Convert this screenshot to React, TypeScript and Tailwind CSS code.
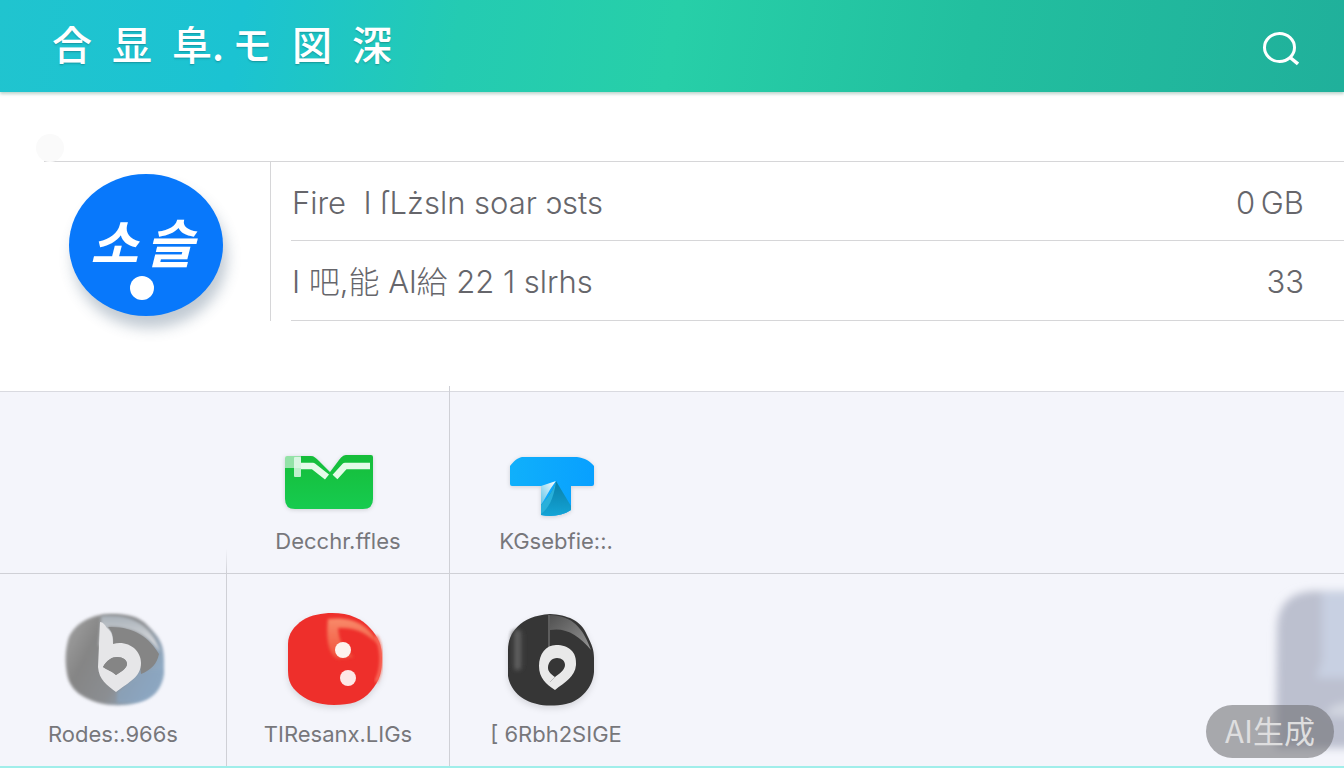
import type { ReactNode } from "react";

const titleGlyphs = ["合", "显", "阜.", "モ", "図", "深"];

const stats = [
  { label: "Fire\u00a0 I \u017fL\u017csln soar \u0254sts", value: "0\u2009GB" },
  { label: "I 吧,能 Al給 22 1 slrhs", value: "33" },
];

function SearchIcon() {
  return (
    <svg viewBox="0 0 36 34" className="h-[34px] w-9" fill="none" stroke="white" strokeWidth="3">
      <ellipse cx="16.5" cy="15.5" rx="15" ry="14" />
      <path d="M26.500 25 L35 32" strokeWidth="3.5" />
    </svg>
  );
}

function FolderIcon() {
  return (
    <svg viewBox="0 0 120 112" className="h-28 w-[120px] drop-shadow-sm">
      <defs>
        <linearGradient id="folder" x1="0" y1="0" x2="0" y2="1">
          <stop offset="0" stopColor="#16bd3a" />
          <stop offset="1" stopColor="#16cb4f" />
        </linearGradient>
      </defs>
      <path
        d="M9 41 H33 C36 41 38 43 41 46 L52 57 L61 45 C64 41 66 40 69 40 H93 Q95 40 95 42 V84 Q95 94 85 94 H17 Q7 94 7 84 V43 Q7 41 9 41Z"
        fill="url(#folder)"
      />
      <rect x="7" y="41" width="16" height="12" fill="#eafaf0" opacity=".6" />
      <rect x="16" y="42" width="7" height="20" rx="1" fill="#eafaf0" opacity=".8" />
      <path d="M23 51 H35 L49 62 M57 62 L67 51 H92" fill="none" stroke="#e6fbe9" strokeWidth="6.5" strokeLinejoin="round" />
    </svg>
  );
}

function BrushIcon() {
  return (
    <svg viewBox="0 0 120 112" className="h-28 w-[120px] drop-shadow-sm">
      <defs>
        <linearGradient id="brush" x1="0" y1="0" x2="1" y2="0">
          <stop offset="0" stopColor="#10b0fb" />
          <stop offset="1" stopColor="#08a0ff" />
        </linearGradient>
        <linearGradient id="brushLight" x1="0" y1="1" x2="1" y2="0">
          <stop offset="0" stopColor="#5fc4e8" />
          <stop offset="1" stopColor="#ffffff" />
        </linearGradient>
        <linearGradient id="brushDark" x1="0" y1="0" x2="0" y2="1">
          <stop offset="0" stopColor="#0a7fa8" />
          <stop offset="1" stopColor="#13a4d6" />
        </linearGradient>
      </defs>
      <path
        d="M26 42 H81 C89 43 94 46 98 51 V69 Q98 71 96 71 H75 V95 C66 101 55 102 45 100 V71 H16 Q14 71 14 69 V51 C18 46 21 43 26 42Z"
        fill="url(#brush)"
      />
      <path d="M45 71 L60 66 C55 72 50 82 45 90Z" fill="url(#brushLight)" />
      <path d="M60 66 L75 91 V95 C66 101 55 102 45 100 V90 C50 84 57 78 60 66Z" fill="url(#brushDark)" />
      <path d="M60 66 C57 78 50 84 45 90 V99 C52 94 58 84 60 66Z" fill="#29b0da" />
    </svg>
  );
}

function SilverIcon() {
  return (
    <svg viewBox="0 0 120 112" className="h-28 w-[120px]">
      <defs>
        <linearGradient id="silver" x1="0" y1="0" x2="1" y2=".5">
          <stop offset="0" stopColor="#a5a5a5" />
          <stop offset=".35" stopColor="#858585" />
          <stop offset=".7" stopColor="#8b8e92" />
          <stop offset="1" stopColor="#8fa9c2" />
        </linearGradient>
        <linearGradient id="stem" x1="0" y1="0" x2="0" y2="1">
          <stop offset="0" stopColor="#a8b0b8" />
          <stop offset="1" stopColor="#e6e6e8" />
        </linearGradient>
        <filter id="silverSoft" x="-10%" y="-10%" width="120%" height="120%">
          <feGaussianBlur stdDeviation="1.5" />
        </filter>
      </defs>
      <path
        d="M58 6 C74 6 86 8 95 18 C106 29 111 36 111 52 V66 C109 82 99 92 83 95 C72 98 58 98 46 95 C29 90 17 82 14 66 C12 54 12 44 15 32 C19 18 36 6 58 6Z"
        fill="url(#silver)"
        filter="url(#silverSoft)"
      />
      <path d="M64 84 L90 62 L109 62 C107 80 98 91 83 94 L64 95Z" fill="#8aa4bf" opacity=".7" filter="url(#silverSoft)" />
      <path d="M48 8 C78 5 99 17 107 44 C94 26 78 19 54 19 L60 24 V38 H46Z" fill="url(#stem)" filter="url(#silverSoft)" />
      <path d="M55 19 C80 18 96 29 106 46 C104 56 98 62 88 66 C88 48 76 36 60 37 C61 29 59 23 55 19Z" fill="#858585" />
      <path
        d="M47 14 C50 14 52 17 54 20 C59 24 60 29 60 36 C75 32 88 42 88 55 C88 69 76 74 63 84 C54 77 46 72 45 59Z M50 59 C54 52 59 49 64 49 C70 49 74 52 74 56 C74 60 68 64 63 67 C59 63 54 62 50 59Z"
        fill="#e6e6e8"
        fillRule="evenodd"
      />
      <path d="M50 59 C54 52 59 49 64 49 C70 49 74 52 74 56 C74 60 68 64 63 67 C59 63 54 62 50 59Z" fill="#858585" />
    </svg>
  );
}

function DiceIcon() {
  return (
    <svg viewBox="0 0 120 112" className="h-28 w-[120px] drop-shadow-md">
      <defs>
        <linearGradient id="diceGlow" x1="0" y1="0" x2="0" y2="1">
          <stop offset="0" stopColor="#f98a6a" />
          <stop offset="1" stopColor="#f0503a" />
        </linearGradient>
        <filter id="diceSoft" x="-20%" y="-20%" width="140%" height="140%">
          <feGaussianBlur stdDeviation="1.5" />
        </filter>
      </defs>
      <path
        d="M54 5 C72 5 84 11 92 20 C100 29 104 36 104 50 C104 64 102 72 93 83 C84 94 72 97 56 97 C40 97 27 92 18 83 C11 76 10 70 10 61 V36 C10 26 16 18 25 12 C33 7 44 5 54 5Z"
        fill="#ee2f2b"
      />
      <path d="M50 11 C76 8 92 18 101 37 C88 24 76 19 60 20 C61 32 64 40 76 49 L60 51 C50 47 48 30 50 11Z" fill="url(#diceGlow)" filter="url(#diceSoft)" />
      <path d="M98 28 C105 42 105 60 98 74" fill="none" stroke="#fb7462" strokeWidth="3" filter="url(#diceSoft)" />
      <circle cx="65" cy="42" r="8" fill="#fdf3ee" />
      <circle cx="70" cy="70" r="8" fill="#fde8e6" />
    </svg>
  );
}

function PinIcon() {
  return (
    <svg viewBox="0 0 120 112" className="h-28 w-[120px] drop-shadow-md">
      <defs>
        <linearGradient id="pinShine" x1="0" y1="0" x2="1" y2="0">
          <stop offset="0" stopColor="#303030" />
          <stop offset=".5" stopColor="#6a6a6a" />
          <stop offset="1" stopColor="#363636" />
        </linearGradient>
        <linearGradient id="pinFold" x1="0" y1="0" x2="1" y2="1">
          <stop offset="0" stopColor="#505050" />
          <stop offset="1" stopColor="#959595" />
        </linearGradient>
        <filter id="pinSoft" x="-40%" y="-20%" width="180%" height="140%">
          <feGaussianBlur stdDeviation="2" />
        </filter>
      </defs>
      <path
        d="M54 6 C71 7 85 12 91 27 C96 37 98 42 98 50 V64 C97 79 85 93 70 96 C60 98 48 98 41 96 C26 93 14 82 12 68 V42 C12 25 24 8 54 6Z"
        fill="#363636"
      />
      <rect x="16" y="22" width="11" height="40" rx="5" fill="url(#pinShine)" filter="url(#pinSoft)" />
      <path d="M54 7 C72 8 85 14 95 42 C83 27 69 19 54 22Z" fill="url(#pinFold)" />
      <path d="M53 7 V42" stroke="#858585" />
      <path
        d="M60 37 C73 37 81 44 80 57 C79 69 69 74 59 82 C50 76 43 70 43 58 C43 46 50 37 60 37Z M61 50 C56 50 52 54 52 60 C52 64 56 67 59 69 C63 66 69 62 69 57 C69 53 66 50 61 50Z"
        fill="#e9e9e9"
        fillRule="evenodd"
      />
      <path d="M59 69 L54 74" stroke="#bdbdbd" />
    </svg>
  );
}

function Tile({ icon, label, className = "" }: { icon: ReactNode; label: string; className?: string }) {
  return (
    <button className={`relative flex flex-col items-center justify-end border-[#cfd0d6] pb-[18px] ${className}`}>
      {icon}
      <span className="text-[22px] leading-7 whitespace-nowrap text-[#77777b]">{label}</span>
    </button>
  );
}

export default function App() {
  return (
    <main className="relative flex min-h-screen flex-col overflow-hidden bg-white font-['Inter','Noto_Sans_CJK_SC',sans-serif]">
      <header className="flex h-[92px] items-center justify-between bg-[linear-gradient(100deg,#20c4cf_0%,#1bc3d2_18%,#24cbb2_34%,#27cfa8_50%,#22bf9f_72%,#20b09b_100%)] pr-[45px] pl-[52px] shadow-[0_2px_3px_rgba(60,130,110,0.35)]">
        <h1 className="flex gap-5 pb-1.5 font-['Noto_Sans_CJK_JP',sans-serif] text-[40px] leading-[60px] font-medium text-white text-shadow-sm">
          {titleGlyphs.map((g) => (
            <span key={g} className="w-10 whitespace-nowrap">
              {g}
            </span>
          ))}
        </h1>
        <button aria-label="Search" className="mt-1.5">
          <SearchIcon />
        </button>
      </header>

      {/* Storage summary */}
      <section className="pt-[69px] pb-[70px] pl-11">
        <div className="relative flex border-t border-[#d6d6d8]">
          <span className="absolute -top-7 -left-2 size-7 rounded-full bg-[#fafafa]" />
          <div className="w-[227px] shrink-0 border-r border-[#d6d6d8] pt-3 pl-[25px]">
            <div className="flex h-[142px] w-[154px] flex-col items-center rounded-[50%] bg-[#0878fb] pt-8 pr-2 shadow-[4px_12px_14px_rgba(50,80,110,0.3)]">
              <span className="flex gap-2 font-['Noto_Sans_CJK_KR',sans-serif] text-[52px] leading-[70px] font-bold text-white italic">
                <span>소</span>
                <span>슬</span>
              </span>
              <span className="size-6 shrink-0 rounded-full bg-white" />
            </div>
          </div>
          <dl className="grow pl-5">
            {stats.map((s) => (
              <div
                key={s.value}
                className="flex h-[79px] items-center justify-between border-b border-[#d6d6d8] pt-1 pr-10 pl-px text-[31px] text-[#66666b] last:h-20"
              >
                <dt className="font-light">{s.label}</dt>
                <dd className="font-light">{s.value}</dd>
              </div>
            ))}
          </dl>
        </div>
      </section>

      {/* File categories */}
      <section className="grid grow grid-cols-[227px_223px_212px_1fr] grid-rows-[182px_1fr] border-t border-b-2 border-t-[#d9dae0] border-b-[#a0eeea] bg-[#f4f5fb]">
        <div className="flex items-end justify-end border-b border-[#cfd0d6]">
          <span className="h-6 w-px bg-linear-to-t from-[#cfd0d6] to-transparent" />
        </div>
        <Tile
          icon={<FolderIcon />}
          label="Decchr.ffles"
          className="border-r border-b before:absolute before:-top-1.5 before:-right-px before:h-1.5 before:w-px before:bg-[#cfd0d6]"
        />
        <Tile icon={<BrushIcon />} label="KGsebfie::." className="border-b" />
        <div className="border-b border-[#cfd0d6]" />
        <Tile icon={<SilverIcon />} label="Rodes:.966s" className="border-r" />
        <Tile icon={<DiceIcon />} label="TIResanx.LIGs" className="border-r" />
        <Tile icon={<PinIcon />} label="[ 6Rbh2SIGE" />
      </section>

      <svg viewBox="0 0 90 190" className="absolute right-0 bottom-0 h-[190px] w-[90px]">
        <defs>
          <filter id="haze" x="-20%" y="-20%" width="140%" height="140%">
            <feGaussianBlur stdDeviation="4" />
          </filter>
        </defs>
        <g filter="url(#haze)">
          <path d="M22 170 L23 50 C24 26 36 14 60 13 H100 V170Z" fill="#bcc0cf" />
          <path d="M68 14 H100 V100 H62 L68 82Z" fill="#c8d0e2" />
          <path d="M72 135 C78 127 86 125 100 124 V138 H76Z" fill="#d3d7e1" />
        </g>
      </svg>
      <div className="absolute right-2.5 bottom-2.5 flex h-[53px] items-center rounded-full bg-[#68686c]/55 px-[19px] pb-0.5 font-['Noto_Sans_CJK_SC',sans-serif] text-[31px] text-[#dededf]">
        AI生成
      </div>
    </main>
  );
}
